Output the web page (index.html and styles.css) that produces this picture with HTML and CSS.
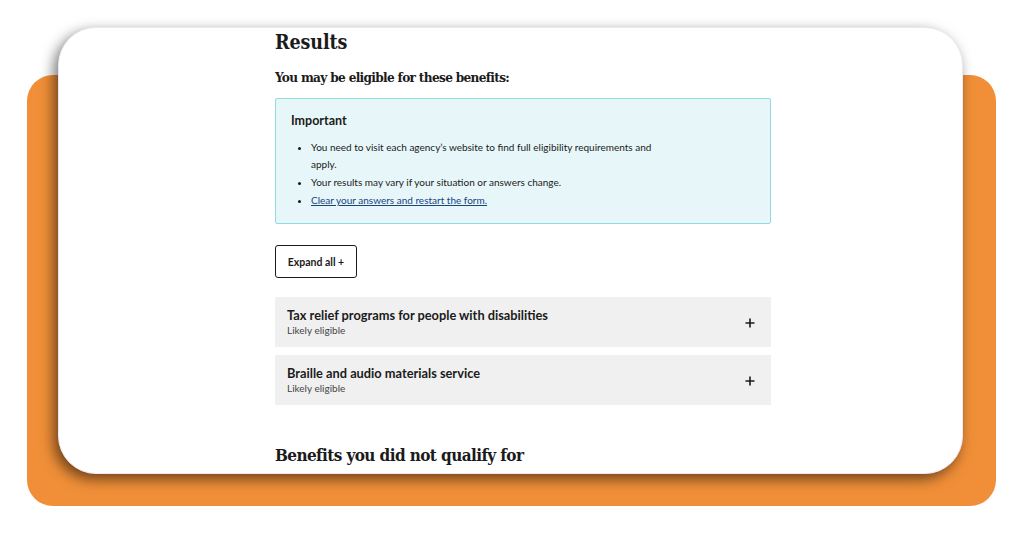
FILE: index.html
```html
<!DOCTYPE html>
<html lang="en">
<head>
<meta charset="utf-8">
<title>Results</title>
<link rel="stylesheet" href="styles.css">
</head>
<body>
<div class="stage">
  <div class="card">
    <main class="content">
      <h1 class="title">Results</h1>
      <h2 class="subtitle">You may be eligible for these benefits:</h2>
      <section class="alert">
        <h3 class="alert-title">Important</h3>
        <ul class="alert-list">
          <li>You need to visit each agency’s website to find full eligibility requirements and apply.</li>
          <li>Your results may vary if your situation or answers change.</li>
          <li><a href="#" class="link">Clear your answers and restart the form.</a></li>
        </ul>
      </section>
      <button class="expand" type="button">Expand all +</button>
      <div class="accordion">
        <div class="acc-item">
          <div class="acc-text">
            <div class="acc-title">Tax relief programs for people with disabilities</div>
            <div class="acc-sub">Likely eligible</div>
          </div>
          <svg class="plus" viewBox="0 0 10 10" width="10" height="10"><path d="M5 0.5V9.5M0.5 5H9.5" stroke="#1b1b1b" stroke-width="1.6" fill="none"/></svg>
        </div>
        <div class="acc-item">
          <div class="acc-text">
            <div class="acc-title">Braille and audio materials service</div>
            <div class="acc-sub">Likely eligible</div>
          </div>
          <svg class="plus" viewBox="0 0 10 10" width="10" height="10"><path d="M5 0.5V9.5M0.5 5H9.5" stroke="#1b1b1b" stroke-width="1.6" fill="none"/></svg>
        </div>
      </div>
      <h2 class="section-title">Benefits you did not qualify for</h2>
    </main>
  </div>
</div>
</body>
</html>
```

FILE: styles.css
```css
* { box-sizing: border-box; }
html, body { margin: 0; padding: 0; background: #ffffff; }
body {
  width: 1024px;
  height: 536px;
  overflow: hidden;
  font-family: "Source Sans Pro", Lato, "Liberation Sans", sans-serif;
  color: #1b1b1b;
}
.stage {
  position: relative;
  width: 1024px;
  height: 536px;
  padding: 27px 0 0 58px;
}
.stage::before {
  content: "";
  position: absolute;
  left: 27px;
  top: 75px;
  width: 969px;
  height: 431px;
  background: #f08f38;
  border-radius: 26px;
}
.card {
  position: relative;
  width: 905px;
  height: 447px;
  background: #ffffff;
  border-radius: 38px;
  border: 1px solid #ece6f5;
  box-shadow: -4px 5px 14px rgba(0, 0, 0, 0.55);
  overflow: hidden;
}
.content {
  width: 496px;
  margin-left: 216px;
  padding-top: 1px;
}
.title, .subtitle, .section-title {
  font-family: "DejaVu Serif Condensed", "DejaVu Serif", "Liberation Serif", serif;
  font-stretch: condensed;
  font-weight: 700;
  margin: 0;
}
.title {
  font-size: 19.5px;
  line-height: 26px;
  letter-spacing: -0.1px;
  padding-top: 1px;
}
.subtitle {
  font-size: 13.5px;
  line-height: 20px;
  margin-top: 11px;
  letter-spacing: -0.68px;
}
.alert {
  margin-top: 11px;
  background: #e7f6f8;
  border: 1px solid #8fdbe8;
  border-radius: 2px;
  padding: 13px 15px 14px;
  height: 126px;
}
.alert-title {
  margin: 0;
  font-size: 12.5px;
  font-weight: 700;
  line-height: 18px;
}
.alert-list {
  margin: 9px 0 0;
  padding-left: 20px;
  width: 370px;
  font-size: 10px;
  line-height: 17px;
}
.alert-list li { margin: 0 0 1px; }
.link { color: #1a4480; text-decoration: underline; }
.expand {
  display: block;
  margin-top: 21px;
  width: 82px;
  height: 33px;
  border: 1.5px solid #1b1b1b;
  border-radius: 3px;
  background: #ffffff;
  font-family: inherit;
  font-weight: 700;
  font-size: 10.5px;
  color: #1b1b1b;
  padding: 0;
}
.accordion {
  margin-top: 19px;
  display: flex;
  flex-direction: column;
  gap: 8px;
}
.acc-item {
  display: flex;
  align-items: center;
  justify-content: space-between;
  height: 50px;
  background: #f0f0f0;
  padding: 0 16px 0 12px;
}
.acc-title {
  font-size: 12.8px;
  font-weight: 700;
  line-height: 16px;
}
.acc-sub {
  font-size: 10px;
  line-height: 14px;
  color: #454545;
}
.plus { display: block; margin-top: 2px; }
.section-title {
  font-size: 17px;
  line-height: 24px;
  margin-top: 38px;
  letter-spacing: -0.6px;
}
```
